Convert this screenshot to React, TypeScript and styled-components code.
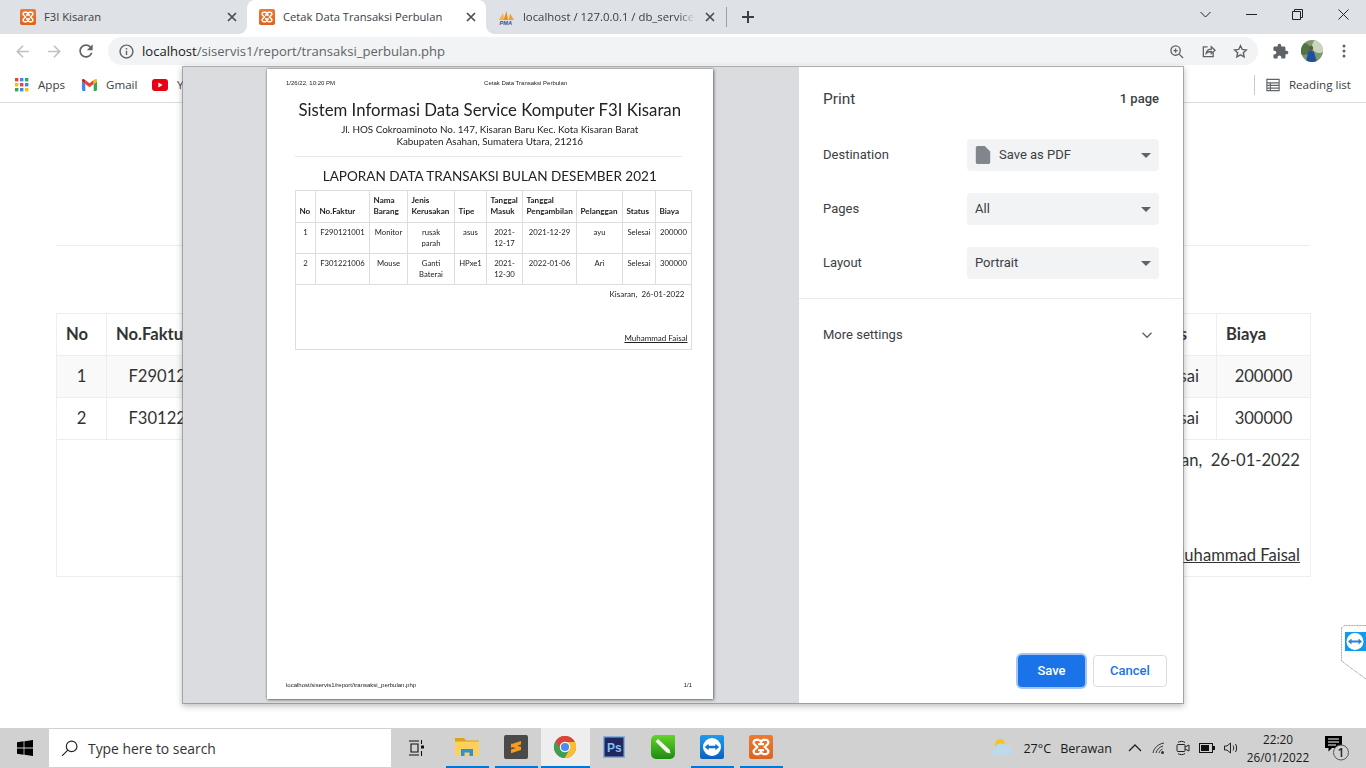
import React from "react";
import styled, { createGlobalStyle } from "styled-components";

const Global = createGlobalStyle`
  html, body { margin: 0; padding: 0; height: 100%; overflow: hidden; background: #fff; }
  #root { height: 100%; }
  * { box-sizing: border-box; }
`;

const UI = `"Open Sans", "Noto Sans", sans-serif`;
const PRINT_UI = `Roboto, "Liberation Sans", sans-serif`;
const PAGE = `Lato, "Liberation Sans", sans-serif`;

const Screen = styled.div`
  position: relative;
  width: 1366px;
  height: 768px;
  display: flex;
  flex-direction: column;
  overflow: hidden;
  font-family: ${UI};
  color: #333;
`;

/* ---------- Tab strip ---------- */
const TabStrip = styled.div`
  height: 34px;
  flex: none;
  background: #dee1e6;
  display: flex;
  align-items: stretch;
`;
const Tab = styled.div<{ $active?: boolean; $w: number; $pad: number }>`
  position: relative;
  width: ${(p) => p.$w}px;
  padding-left: ${(p) => p.$pad}px;
  display: flex;
  align-items: center;
  background: ${(p) => (p.$active ? "#fff" : "transparent")};
  border-radius: 8px 8px 0 0;
  ${(p) =>
    p.$active &&
    `
    &::before, &::after {
      content: "";
      position: absolute;
      bottom: 0;
      width: 8px;
      height: 8px;
      background: radial-gradient(circle at 0 0, #dee1e6 7.5px, #fff 8px);
    }
    &::before { left: -8px; }
    &::after { right: -8px; background: radial-gradient(circle at 100% 0, #dee1e6 7.5px, #fff 8px); }
  `}
`;
const TabTitle = styled.span<{ $w: number; $fade?: boolean }>`
  width: ${(p) => p.$w}px;
  margin-left: 8px;
  font-size: ${(p) => (p.$fade ? 11.35 : 11.2)}px;
  line-height: 16px;
  white-space: nowrap;
  overflow: hidden;
  color: #3c4043;
  ${(p) =>
    p.$fade &&
    `-webkit-mask-image: linear-gradient(90deg, #000 90%, transparent 100%); mask-image: linear-gradient(90deg, #000 90%, transparent 100%);`}
`;
const TabClose = styled.span<{ $left: number }>`
  position: absolute;
  left: ${(p) => p.$left}px;
  top: 11px;
  width: 12px;
  height: 12px;
  display: flex;
`;
const TabDivider = styled.div`
  width: 1px;
  height: 20px;
  margin: 7px 0 0 0;
  background: #9aa0a6;
`;
const NewTab = styled.div`
  width: 42px;
  display: flex;
  align-items: center;
  justify-content: center;
`;
const WindowButtons = styled.div`
  margin-left: auto;
  display: flex;
`;
const WindowButton = styled.div`
  width: 46px;
  height: 28px;
  display: flex;
  align-items: center;
  justify-content: center;
`;

/* ---------- Toolbar ---------- */
const Toolbar = styled.div`
  height: 34px;
  flex: none;
  background: #fff;
  display: flex;
  align-items: center;
  padding-left: 6px;
`;
const NavButton = styled.div`
  width: 32px;
  height: 28px;
  display: flex;
  align-items: center;
  justify-content: center;
`;
const Omnibox = styled.div`
  width: 1150px;
  height: 28px;
  margin-left: 6px;
  background: #f1f3f4;
  border-radius: 14px;
  display: flex;
  align-items: center;
  padding-left: 10px;
  padding-right: 2px;
`;
const Url = styled.span`
  margin-left: 7px;
  font-size: 13.07px;
  color: #5f6368;
  white-space: nowrap;
  b { font-weight: 400; color: #202124; }
`;
const OmniActions = styled.div`
  margin-left: auto;
  display: flex;
`;
const ToolbarEnd = styled.div`
  display: flex;
  margin-left: 6px;
`;

/* ---------- Bookmarks ---------- */
const Bookmarks = styled.div`
  height: 35px;
  flex: none;
  background: #fff;
  border-bottom: 1px solid #d9dbdf;
  display: flex;
  align-items: center;
  padding: 0 0 1px 15px;
  color: #3c4043;
`;
const Bookmark = styled.div<{ $w: number }>`
  width: ${(p) => p.$w}px;
  display: flex;
  align-items: center;
  gap: 9px;
  white-space: nowrap;
`;
const ReadingList = styled.div`
  margin-left: auto;
  margin-right: 15px;
  display: flex;
  align-items: center;
  height: 20px;
  padding-left: 11px;
  gap: 9px;
  border-left: 1px solid #c8cacd;
`;
const Caption = styled.span`
  font-size: 11.6px;
`;

/* ---------- Page behind the dialog ---------- */
const PageArea = styled.main`
  flex: 1;
  padding: 0 56px;
  background: #fff;
  font-family: ${PAGE};
  font-size: 16.6px;
  line-height: 24.6px;
  color: #333;
`;
const PageHead = styled.div`
  height: 143px;
  border-bottom: 1px solid #eee;
  margin-bottom: 67px;
`;
const BackTable = styled.table`
  width: 1254px;
  table-layout: fixed;
  border-collapse: collapse;
  th, td {
    border: 1px solid #eee;
    padding: 8px 9px;
    height: 42px;
    font-weight: 400;
    text-align: center;
    white-space: nowrap;
  }
  th { font-weight: 700; text-align: left; }
  tbody tr:nth-child(1) td { background: #f9f9f9; }
  tbody tr:nth-child(3) td { background: #fff; height: 137px; vertical-align: top; text-align: right; padding-right: 10px; }
`;
const SignName = styled.div`
  margin-top: 70px;
  text-decoration: underline;
`;

/* ---------- Print dialog ---------- */
const Dialog = styled.section`
  position: absolute;
  left: 183px;
  top: 67px;
  width: 1000px;
  height: 636px;
  display: flex;
  background: #fff;
  box-shadow: 0 0 0 1px rgba(120, 120, 120, 0.55), 0 2px 6px 1px rgba(60, 64, 67, 0.35);
`;
const PreviewPane = styled.div`
  width: 616px;
  flex: none;
  background: #dadce0;
  padding: 2px 0 0 84px;
`;
const Sheet = styled.article`
  width: 446px;
  height: 630px;
  background: #fff;
  box-shadow: 0 0 2px rgba(0, 0, 0, 0.45), 1px 1px 3px rgba(0, 0, 0, 0.4);
  display: flex;
  flex-direction: column;
  padding: 10px 21px 10px 19px;
  font-family: "Liberation Sans", Arial, sans-serif;
  font-size: 6px;
  color: #222;
`;
const SheetMarginRow = styled.div`
  display: flex;
  height: 8px;
  align-items: center;
  justify-content: space-between;
  white-space: nowrap;
  filter: blur(0.2px);
`;
const SheetTitle = styled.span`
  margin-left: 149px;
  margin-right: auto;
`;
const SheetBody = styled.div`
  flex: 1;
  padding: 12px 0 0 9px;
  font-family: ${PAGE};
  color: #222;
  filter: blur(0.2px);
`;
const Letterhead = styled.header`
  width: 389.5px;
  text-align: center;
`;
const OrgName = styled.h1`
  margin: 0;
  font-size: 16.75px;
  line-height: 22px;
  font-weight: 400;
  white-space: nowrap;
`;
const OrgAddress = styled.p`
  margin: 3px 0 0;
  font-size: 9.9px;
  line-height: 11.5px;
  white-space: nowrap;
`;
const Rule = styled.hr`
  margin: 9px 3px 0 0;
  border: 0;
  border-top: 1px solid #e8e8e8;
`;
const ReportTitle = styled.h2`
  margin: 9px 0 3.5px;
  font-size: 13.55px;
  line-height: 20px;
  font-weight: 400;
  white-space: nowrap;
`;
const PrintTable = styled.table`
  width: 396px;
  table-layout: fixed;
  border-collapse: collapse;
  font-size: 7.7px;
  line-height: 11px;
  th, td {
    border: 1px solid #ddd;
    padding: 4px 3.5px;
    font-weight: 400;
    text-align: center;
    vertical-align: top;
  }
  th { font-size: 8.1px; font-weight: 700; text-align: left; vertical-align: bottom; white-space: nowrap; padding-bottom: 5px; }
  td.foot { text-align: right; height: 65px; }
`;
const PrintDate = styled.div`
  padding-right: 3px;
  font-size: 8px;
`;
const PrintSign = styled.div`
  margin-top: 33px;
  font-size: 8px;
  text-decoration: underline;
`;

const Settings = styled.aside`
  flex: 1;
  display: flex;
  flex-direction: column;
  font-family: ${PRINT_UI};
  font-size: 13px;
  color: #3c4043;
`;
const SettingsHead = styled.div`
  height: 72px;
  padding: 22px 24px 0;
  display: flex;
  justify-content: space-between;
  align-items: flex-start;
`;
const SettingsTitle = styled.span`
  font-size: 15.5px;
  line-height: 20px;
  color: #3c4043;
`;
const PageCount = styled.span`
  font-size: 13px;
  line-height: 20px;
  font-weight: 500;
  color: #3c4043;
`;
const SettingRow = styled.div`
  height: 32px;
  margin: 0 24px 22px;
  display: flex;
  align-items: center;
  justify-content: space-between;
`;
const RowLabel = styled.span`
  margin-top: -2px;
`;
const SelectBox = styled.div`
  width: 192px;
  height: 32px;
  background: #f1f3f4;
  border-radius: 4px;
  display: flex;
  align-items: center;
  padding: 0 8px 2px 8px;
  color: #3c4043;
`;
const Caret = styled.span`
  margin: 2px 0 0 auto;
  width: 0;
  height: 0;
  border-left: 5px solid transparent;
  border-right: 5px solid transparent;
  border-top: 5px solid #5f6368;
`;
const DocIcon = styled.svg`
  margin: 2px 8px 0 0;
  flex: none;
`;
const Divider = styled.div`
  height: 1px;
  margin-top: -3px;
  background: #e8eaed;
`;
const MoreRow = styled.div`
  margin: 0 30px 0 24px;
  height: 73px;
  padding-bottom: 2px;
  display: flex;
  align-items: center;
  justify-content: space-between;
`;
const Actions = styled.div`
  margin-top: auto;
  padding: 0 16px 16px 0;
  display: flex;
  justify-content: flex-end;
  gap: 8px;
`;
const SaveButton = styled.button`
  width: 67px;
  height: 32px;
  border: 0;
  border-radius: 4px;
  background: #1a73e8;
  box-shadow: 0 0 0 2px #a4c6f6;
  color: #fff;
  font: 500 13px ${PRINT_UI};
  padding: 0 0 2px;
`;
const CancelButton = styled.button`
  width: 74px;
  height: 32px;
  background: #fff;
  border: 1px solid #dadce0;
  border-radius: 4px;
  color: #1a73e8;
  font: 500 13px ${PRINT_UI};
  padding: 0 0 2px;
`;

const RemoteTab = styled.div`
  position: absolute;
  right: 0;
  top: 625px;
  width: 25px;
  height: 55px;
  display: flex;
`;

/* ---------- Taskbar ---------- */
const Taskbar = styled.footer`
  height: 40px;
  flex: none;
  background: #d1d1d1;
  display: flex;
  align-items: stretch;
  color: #1a1a1a;
`;
const StartButton = styled.div`
  width: 49px;
  display: flex;
  align-items: center;
  justify-content: center;
`;
const SearchBox = styled.div`
  width: 342px;
  margin: 1px 0;
  background: #fff;
  display: flex;
  align-items: center;
  padding-left: 12px;
  gap: 10px;
  font-size: 13.9px;
  color: #333;
`;
const TaskView = styled.div`
  width: 51.5px;
  padding-left: 2px;
  display: flex;
  align-items: center;
  justify-content: center;
`;
const TaskButton = styled.div<{ $active?: boolean; $open?: boolean }>`
  width: 49px;
  display: flex;
  align-items: center;
  justify-content: center;
  background: ${(p) => (p.$active ? "#eeeeee" : "transparent")};
  border-bottom: 2px solid transparent;
  border-image: ${(p) =>
    p.$open
      ? p.$active
        ? "linear-gradient(#0078d7,#0078d7) 1"
        : "linear-gradient(90deg,transparent 4px,#0078d7 4px,#0078d7 45px,transparent 45px) 1"
      : "none"};
`;
const Tray = styled.div`
  margin-left: auto;
  display: flex;
  align-items: center;
  font-size: 12.6px;
  padding-right: 17px;
`;
const Weather = styled.div`
  display: flex;
  align-items: center;
  gap: 9px;
  white-space: nowrap;
`;
const WeatherIcon = styled.svg`
  margin-right: 1px;
`;
const TrayIcons = styled.div`
  display: flex;
  align-items: center;
  gap: 8px;
  margin-left: 15px;
`;
const Clock = styled.div`
  width: 78px;
  text-align: center;
  font-size: 11.8px;
  line-height: 18px;
`;
const Notify = styled.div`
  margin-left: 8px;
  display: flex;
`;
const ActionSlot = styled.div`
  width: 32px;
  height: 28px;
  display: flex;
  align-items: center;
  justify-content: center;
`;

/* ---------- Icons ---------- */
const Xampp = ({ size = 16 }: { size?: number }) => (
  <svg width={size} height={size} viewBox="0 0 16 16" style={{ flex: "none" }}>
    <defs>
      <linearGradient id="xg" x1="0" y1="0" x2="0" y2="1">
        <stop offset="0" stopColor="#ef7a2f" />
        <stop offset="1" stopColor="#dc6420" />
      </linearGradient>
    </defs>
    <rect width="16" height="16" rx="1.8" fill="url(#xg)" />
    <path
      d="M6.8 3.2H4.7A1.7 1.7 0 0 0 3.5 6L5.5 8 3.5 10A1.7 1.7 0 0 0 4.700 12.800H6.800M9.200 3.200h2.100A1.700 1.700 0 0 1 12.500 6L10.500 8l2 2A1.700 1.700 0 0 1 11.300 12.800H9.200M6 6h4M6 10h4M6.800 3.200 8 4.600l1.200-1.400M6.800 12.800 8 11.400l1.200 1.400"
      fill="none"
      stroke="#fff"
      strokeWidth="1.5"
    />
  </svg>
);
const Pma = () => (
  <svg width="17" height="16" viewBox="0 0 17 16" style={{ flex: "none" }}>
    <path d="M1 11 5 4l1 7z" fill="#f7b23b" />
    <path d="M5.5 11 8.500 2 10 11z" fill="#ee8a1d" />
    <path d="M10.500 11 12 4.500 16 11z" fill="#f4a025" />
    <text x="1.500" y="16" fontFamily="Liberation Sans" fontSize="5.600" fontWeight="700" fontStyle="italic" fill="#2f4f8f">PMA</text>
  </svg>
);
const CloseX = () => (
  <svg width="12" height="12" viewBox="0 0 12 12">
    <path d="M2 2l8 8M10 2l-8 8" stroke="#494c50" strokeWidth="1.7" />
  </svg>
);
const Mat = ({ d, color, size = 18 }: { d: string; color: string; size?: number }) => (
  <svg width={size} height={size} viewBox="0 0 24 24" style={{ flex: "none" }}>
    <path d={d} fill={color} />
  </svg>
);
const Line = ({ children, size = 16, color = "#5f6368", w = 1.6 }: { children: React.ReactNode; size?: number; color?: string; w?: number }) => (
  <svg width={size} height={size} viewBox="0 0 16 16" fill="none" stroke={color} strokeWidth={w} style={{ flex: "none" }}>
    {children}
  </svg>
);
const WinGlyph = ({ children }: { children: React.ReactNode }) => (
  <svg width="11" height="11" viewBox="0 0 11 11" fill="none" stroke="#222" strokeWidth="1">
    {children}
  </svg>
);
const Apps = () => {
  const c = ["#ea4335", "#4285f4", "#34a853", "#fbbc05", "#ea4335", "#4285f4", "#34a853", "#4285f4", "#fbbc05"];
  return (
    <svg width="14" height="14" viewBox="0 0 14 14" style={{ flex: "none" }}>
      {c.map((f, i) => (
        <rect key={i} x={(i % 3) * 5} y={Math.floor(i / 3) * 5} width="3.4" height="3.4" fill={f} />
      ))}
    </svg>
  );
};
const Gmail = () => (
  <svg width="15" height="12" viewBox="0 0 15 12" style={{ flex: "none" }}>
    <path d="M0 1.200v9.600C0 11.400.5 12 1.200 12H3.300V5L0 2.200z" fill="#4285f4" />
    <path d="M15 1.200v9.600c0 .6-.5 1.200-1.200 1.200h-2.100V5L15 2.200z" fill="#34a853" />
    <path d="M3.300 5 7.500 8.200 11.700 5V1L7.500 4.200 3.300 1z" fill="#ea4335" />
    <path d="M0 2.200 3.300 5V1L2 .2C1 -.3 0 .3 0 1.200z" fill="#c5221f" />
    <path d="M15 2.200 11.700 5V1L13 .2c1-.5 2 .1 2 1z" fill="#fbbc05" />
  </svg>
);
const Youtube = () => (
  <svg width="16" height="12" viewBox="0 0 16 12" style={{ flex: "none" }}>
    <rect width="16" height="12" rx="3" fill="#e60012" />
    <path d="M6.400 3.400v5.200L10.600 6z" fill="#fff" />
  </svg>
);
const Avatar = () => (
  <svg width="22" height="22" viewBox="0 0 22 22" style={{ flex: "none" }}>
    <defs>
      <clipPath id="av"><circle cx="11" cy="11" r="11" /></clipPath>
    </defs>
    <g clipPath="url(#av)">
      <rect width="22" height="22" fill="#7d9a6c" />
      <circle cx="18" cy="6" r="7" fill="#c9d6bd" />
      <circle cx="3" cy="9" r="6" fill="#4f7343" />
      <path d="M5 22l2-10 3-2 3 2 3 10z" fill="#1f4f9e" />
      <circle cx="10" cy="8" r="2.200" fill="#6b5140" />
    </g>
  </svg>
);
const Chrome = () => {
  const wedge = "M24 24 24 14 43.600 14A22 22 0 0 0 5.540 12.030L15.340 29Z";
  return (
    <svg width="24" height="24" viewBox="0 0 48 48">
      <circle cx="24" cy="24" r="22" fill="#db4437" />
      <path d={wedge} fill="#db4437" />
      <path d={wedge} fill="#fbc02d" transform="rotate(120 24 24)" />
      <path d={wedge} fill="#3d9f52" transform="rotate(240 24 24)" />
      <circle cx="24" cy="24" r="10.500" fill="#fff" />
      <circle cx="24" cy="24" r="8.200" fill="#4c8bf5" />
    </svg>
  );
};
const Explorer = () => (
  <svg width="24" height="24" viewBox="0 0 24 24">
    <path d="M0 3h9l2 2.500H24V8H0z" fill="#d9a21b" />
    <path d="M0 6.500h24V21H0z" fill="#fbd15b" />
    <path d="M6 14h12v7h-3.500v-3.500h-5V21H6z" fill="#2f8fd8" />
  </svg>
);
const Sublime = () => (
  <svg width="24" height="24" viewBox="0 0 24 24">
    <rect width="24" height="24" rx="2" fill="#4a4a4a" />
    <path d="M7 9.200 17 6v3.600L7 12.800zM17 15l-10-3.400v-3l10 3.400zM7 14.600 17 11.400V15L7 18.200z" fill="#f79a1e" />
  </svg>
);
const Photoshop = () => (
  <svg width="22" height="22" viewBox="0 0 22 22">
    <rect x=".75" y=".75" width="20.500" height="20.500" fill="#20275c" stroke="#86aee0" strokeWidth="1.500" />
    <text x="4" y="15.500" fontFamily="Liberation Sans" fontWeight="700" fontSize="12" fill="#86bdf5">Ps</text>
  </svg>
);
const GreenPen = () => (
  <svg width="24" height="24" viewBox="0 0 24 24">
    <defs>
      <linearGradient id="gp" x1="0" y1="0" x2="0" y2="1">
        <stop offset="0" stopColor="#63d52a" />
        <stop offset="1" stopColor="#1d8a12" />
      </linearGradient>
    </defs>
    <path d="M5 0H24V19a5 5 0 0 1-5 5H5a5 5 0 0 1-5-5V5a5 5 0 0 1 5-5z" fill="url(#gp)" />
    <path d="M4.500 6.500 7 4 18.500 14.500 19.500 18.500 15.500 17.500z" fill="#f3f5ee" />
  </svg>
);
const TeamViewer = () => (
  <svg width="24" height="24" viewBox="0 0 24 24">
    <defs>
      <linearGradient id="tv" x1="0" y1="0" x2="0" y2="1">
        <stop offset="0" stopColor="#1b9ef0" />
        <stop offset="1" stopColor="#0a5fc0" />
      </linearGradient>
    </defs>
    <rect width="24" height="24" rx="2" fill="url(#tv)" />
    <circle cx="12" cy="12" r="9" fill="#fff" />
    <path d="M4.800 12 8.600 8.800v2h6.800v-2l3.800 3.200-3.800 3.200v-2H8.600v2z" fill="#0e72d8" />
  </svg>
);

const backCols = [50, 140, 130, 170, 110, 155, 200, 120, 85, 94];
const printCols = [20, 54, 38, 47, 32, 36, 54, 46, 33, 36];
const headers = ["No", "No.Faktur", "Nama Barang", "Jenis Kerusakan", "Tipe", "Tanggal Masuk", "Tanggal Pengambilan", "Pelanggan", "Status", "Biaya"];
const rows = [
  ["1", "F290121001", "Monitor", "rusak parah", "asus", "2021-12-17", "2021-12-29", "ayu", "Selesai", "200000"],
  ["2", "F301221006", "Mouse", "Ganti Baterai", "HPxe1", "2021-12-30", "2022-01-06", "Ari", "Selesai", "300000"],
];

export default function App() {
  return (
    <Screen>
      <Global />
      <TabStrip>
        <Tab $w={247} $pad={20}>
          <Xampp />
          <TabTitle $w={170}>F3I Kisaran</TabTitle>
          <TabClose $left={226}><CloseX /></TabClose>
        </Tab>
        <Tab $active $w={239} $pad={12}>
          <Xampp />
          <TabTitle $w={190}>Cetak Data Transaksi Perbulan</TabTitle>
          <TabClose $left={218}><CloseX /></TabClose>
        </Tab>
        <Tab $w={240} $pad={12}>
          <Pma />
          <TabTitle $w={172} $fade>localhost / 127.0.0.1 / db_service</TabTitle>
          <TabClose $left={218}><CloseX /></TabClose>
        </Tab>
        <TabDivider />
        <NewTab>
          <Line size={16} color="#3c4043" w={2}><path d="M8 2v12M2 8h12" /></Line>
        </NewTab>
        <WindowButtons>
          <WindowButton>
            <WinGlyph><path d="M.5 3 5.500 8 10.500 3" /></WinGlyph>
          </WindowButton>
          <WindowButton>
            <WinGlyph><path d="M0 5.500h11" /></WinGlyph>
          </WindowButton>
          <WindowButton>
            <WinGlyph><path d="M.5 2.500h8v8h-8zM2.500 2.500V.5h8v8H8.500" /></WinGlyph>
          </WindowButton>
          <WindowButton>
            <WinGlyph><path d="M.5.5l10 10M10.500.5l-10 10" /></WinGlyph>
          </WindowButton>
        </WindowButtons>
      </TabStrip>

      <Toolbar>
        <NavButton><Mat d="M20 11H7.830l5.590-5.590L12 4l-8 8 8 8 1.410-1.410L7.830 13H20v-2z" color="#bdc1c6" size={19} /></NavButton>
        <NavButton><Mat d="M12 4l-1.410 1.410L16.170 11H4v2h12.170l-5.580 5.590L12 20l8-8z" color="#bdc1c6" size={19} /></NavButton>
        <NavButton><Mat d="M17.650 6.350C16.200 4.900 14.210 4 12 4c-4.420 0-7.990 3.580-7.990 8s3.570 8 7.990 8c3.730 0 6.840-2.550 7.730-6h-2.080c-.82 2.330-3.040 4-5.650 4-3.310 0-6-2.690-6-6s2.690-6 6-6c1.660 0 3.140.69 4.220 1.780L13 11h7V4l-2.350 2.350z" color="#5f6368" size={20} /></NavButton>
        <Omnibox>
          <Mat d="M11 7h2v2h-2zm0 4h2v6h-2zm1-9C6.480 2 2 6.480 2 12s4.480 10 10 10 10-4.480 10-10S17.520 2 12 2zm0 18c-4.410 0-8-3.590-8-8s3.590-8 8-8 8 3.590 8 8-3.590 8-8 8z" color="#5f6368" size={17} />
          <Url><b>localhost</b>/siservis1/report/transaksi_perbulan.php</Url>
          <OmniActions>
            <ActionSlot>
              <Line size={15} w={1.4}><circle cx="7" cy="7" r="5" /><path d="M10.800 10.800 15 15M4.800 7h4.400M7 4.800v4.400" /></Line>
            </ActionSlot>
            <ActionSlot>
              <Line size={15} w={1.4}><path d="M7 3H2.500v10.500H13V9" /><path d="M5.500 10C6 7 8 5.500 11 5.500V3l4 3.700-4 3.500V8C9 8 7 8.500 5.500 10z" /></Line>
            </ActionSlot>
            <ActionSlot>
              <Line size={15} w={1.5}><path d="M8 1.800l1.900 4 4.300.5-3.200 3 .9 4.400L8 11.500l-3.900 2.200.9-4.400-3.200-3 4.300-.5z" /></Line>
            </ActionSlot>
          </OmniActions>
        </Omnibox>
        <ToolbarEnd>
          <ActionSlot><Mat d="M20.500 11H19V7c0-1.100-.9-2-2-2h-4V3.500C13 2.120 11.880 1 10.500 1S8 2.120 8 3.500V5H4c-1.100 0-1.990.9-1.990 2v3.800H3.500c1.490 0 2.700 1.210 2.700 2.700s-1.210 2.700-2.700 2.700H2V20c0 1.100.9 2 2 2h3.800v-1.500c0-1.490 1.210-2.700 2.700-2.700 1.490 0 2.700 1.210 2.700 2.700V22H17c1.100 0 2-.9 2-2v-4h1.500c1.380 0 2.500-1.120 2.500-2.500S21.880 11 20.500 11z" color="#5f6368" size={17} /></ActionSlot>
          <ActionSlot><Avatar /></ActionSlot>
          <ActionSlot>
            <svg width="4" height="14" viewBox="0 0 4 14"><circle cx="2" cy="2" r="1.500" fill="#5f6368" /><circle cx="2" cy="7" r="1.500" fill="#5f6368" /><circle cx="2" cy="12" r="1.500" fill="#5f6368" /></svg>
          </ActionSlot>
        </ToolbarEnd>
      </Toolbar>

      <Bookmarks>
        <Bookmark $w={67}><Apps /><Caption>Apps</Caption></Bookmark>
        <Bookmark $w={70}><Gmail /><Caption>Gmail</Caption></Bookmark>
        <Bookmark $w={60}><Youtube /><Caption>YouTube</Caption></Bookmark>
        <ReadingList>
          <Line size={14} color="#5f6368" w={1.3}><path d="M1 1.500h14v13H1zM1 5.500h14M1 8.500h14M1 11.500h14M5 5.500v9" /></Line>
          <Caption>Reading list</Caption>
        </ReadingList>
      </Bookmarks>

      <PageArea>
        <PageHead />
        <BackTable>
          <colgroup>{backCols.map((w, i) => <col key={i} style={{ width: w }} />)}</colgroup>
          <thead><tr>{headers.map((h) => <th key={h}>{h}</th>)}</tr></thead>
          <tbody>
            {rows.map((r) => <tr key={r[0]}>{r.map((c, i) => <td key={i}>{c}</td>)}</tr>)}
            <tr>
              <td colSpan={10}>
                Kisaran,&nbsp; 26-01-2022
                <SignName>Muhammad Faisal</SignName>
              </td>
            </tr>
          </tbody>
        </BackTable>
      </PageArea>

      <Taskbar>
        <StartButton>
          <svg width="16" height="16" viewBox="0 0 16 16"><path d="M0 2.300 6.600 1.300V7.600H0zM7.400 1.200 16 0V7.600H7.400zM0 8.400h6.600v6.300L0 13.700zM7.400 8.400H16V16L7.400 14.800z" fill="#000" /></svg>
        </StartButton>
        <SearchBox>
          <Line size={17} color="#222" w={1.1}><circle cx="10" cy="6" r="5" /><path d="M6.400 9.600 1 15" /></Line>
          Type here to search
        </SearchBox>
        <TaskView>
          <svg width="17" height="16" viewBox="0 0 17 16" fill="none" stroke="#111" strokeWidth="1.100"><path d="M0 1h10M0 15h10M2 4h7v8H2zM12.500 0v4M12.500 11v5" /><rect x="12" y="5.500" width="3" height="3" fill="#111" stroke="none" /></svg>
        </TaskView>
        <TaskButton $open><Explorer /></TaskButton>
        <TaskButton $open><Sublime /></TaskButton>
        <TaskButton $active $open><Chrome /></TaskButton>
        <TaskButton><Photoshop /></TaskButton>
        <TaskButton><GreenPen /></TaskButton>
        <TaskButton $open><TeamViewer /></TaskButton>
        <TaskButton $open><Xampp size={24} /></TaskButton>
        <Tray>
          <Weather>
            <WeatherIcon width="22" height="20" viewBox="0 0 22 20">
              <circle cx="9" cy="6" r="5" fill="#f5c51f" />
              <path d="M5 18a4 4 0 0 1-.6-7.900A6 6 0 0 1 15.500 8.500 4.800 4.800 0 0 1 17 18z" fill="#bcd9ee" />
            </WeatherIcon>
            <span>27°C</span>
            <span>Berawan</span>
          </Weather>
          <TrayIcons>
            <Line size={16} color="#222" w={1.3}><path d="M2 11l6-6 6 6" /></Line>
            <Line size={16} color="#333" w={1}><path d="M2 13C3 8 7 4 13 3M5 13c.8-3 3-6 7-7M8 13c.5-2 1.500-3 3.500-4" /><circle cx="11.500" cy="12.500" r="1.500" fill="#333" stroke="none" /></Line>
            <Line size={16} color="#222" w={1}><rect x="2" y="4.500" width="8" height="7" rx="1" /><path d="M10 7l4-2v6l-4-2M3 2.500c1.500-1.500 5.500-1.500 7 0M3 13.500c1.500 1.500 5.500 1.500 7 0" /></Line>
            <svg width="16" height="10" viewBox="0 0 16 10"><rect x=".5" y=".5" width="13" height="9" fill="none" stroke="#111" /><rect x="2" y="2" width="8" height="6" fill="#111" /><rect x="14" y="3" width="2" height="4" fill="#111" /></svg>
            <Line size={16} color="#222" w={1}><path d="M1.500 6v4h2.500l3.500 3V3L4 6zM10 5.500c1 1.500 1 3.500 0 5M12.500 4c1.500 2.500 1.500 5.500 0 8" /></Line>
          </TrayIcons>
          <Clock>22:20<br />26/01/2022</Clock>
          <Notify>
            <svg width="24" height="25" viewBox="0 0 24 25">
              <path d="M0 0h17v12H7l-3.500 3.500V12H0z" fill="#000" />
              <path d="M3 3h11M3 6h11M3 9h8" stroke="#fff" strokeWidth="1" />
              <circle cx="16" cy="16.500" r="7.500" fill="#d1d1d1" stroke="#555" strokeWidth="1" />
              <text x="16" y="21" textAnchor="middle" fontFamily="Open Sans" fontSize="12" fontWeight="600" fill="#222">1</text>
            </svg>
          </Notify>
        </Tray>
      </Taskbar>

      <RemoteTab>
        <svg width="25" height="55" viewBox="0 0 25 55">
          <path d="M25 .5H3L.5 3V36L25 54" fill="#fff" stroke="#9a9a9a" strokeWidth="1" strokeDasharray="1 .6" />
          <rect x="4" y="7" width="21" height="19" fill="#0e9bf0" />
          <circle cx="14" cy="16.500" r="8.500" fill="#fff" />
          <path d="M7 16.500 10.500 13.500v2h7v-2l3.500 3-3.500 3v-2h-7v2z" fill="#2f7fd8" />
        </svg>
      </RemoteTab>

      <Dialog>
        <PreviewPane>
          <Sheet>
            <SheetMarginRow>
              <span>1/26/22, 10:20 PM</span>
              <SheetTitle>Cetak Data Transaksi Perbulan</SheetTitle>
            </SheetMarginRow>
            <SheetBody>
              <Letterhead>
                <OrgName>Sistem Informasi Data Service Komputer F3I Kisaran</OrgName>
                <OrgAddress>
                  Jl. HOS Cokroaminoto No. 147, Kisaran Baru Kec. Kota Kisaran Barat<br />
                  Kabupaten Asahan, Sumatera Utara, 21216
                </OrgAddress>
                <Rule />
                <ReportTitle>LAPORAN DATA TRANSAKSI BULAN DESEMBER 2021</ReportTitle>
              </Letterhead>
              <PrintTable>
                <colgroup>{printCols.map((w, i) => <col key={i} style={{ width: w }} />)}</colgroup>
                <thead>
                  <tr>
                    <th>No</th>
                    <th>No.Faktur</th>
                    <th>Nama<br />Barang</th>
                    <th>Jenis<br />Kerusakan</th>
                    <th>Tipe</th>
                    <th>Tanggal<br />Masuk</th>
                    <th>Tanggal<br />Pengambilan</th>
                    <th>Pelanggan</th>
                    <th>Status</th>
                    <th>Biaya</th>
                  </tr>
                </thead>
                <tbody>
                  {rows.map((r) => <tr key={r[0]}>{r.map((c, i) => <td key={i}>{c}</td>)}</tr>)}
                  <tr>
                    <td className="foot" colSpan={10}>
                      <PrintDate>Kisaran,&nbsp; 26-01-2022</PrintDate>
                      <PrintSign>Muhammad Faisal</PrintSign>
                    </td>
                  </tr>
                </tbody>
              </PrintTable>
            </SheetBody>
            <SheetMarginRow>
              <span>localhost/siservis1/report/transaksi_perbulan.php</span>
              <span>1/1</span>
            </SheetMarginRow>
          </Sheet>
        </PreviewPane>
        <Settings>
          <SettingsHead>
            <SettingsTitle>Print</SettingsTitle>
            <PageCount>1 page</PageCount>
          </SettingsHead>
          <SettingRow>
            <RowLabel>Destination</RowLabel>
            <SelectBox>
              <DocIcon width="16" height="18" viewBox="4 2 16 20"><path d="M6 2c-1.100 0-1.990.9-1.990 2L4 20c0 1.100.89 2 1.990 2H18c1.100 0 2-.9 2-2V8l-6-6z" fill="#80868b" /></DocIcon>
              Save as PDF
              <Caret />
            </SelectBox>
          </SettingRow>
          <SettingRow>
            <RowLabel>Pages</RowLabel>
            <SelectBox>All<Caret /></SelectBox>
          </SettingRow>
          <SettingRow>
            <RowLabel>Layout</RowLabel>
            <SelectBox>Portrait<Caret /></SelectBox>
          </SettingRow>
          <Divider />
          <MoreRow>
            More settings
            <Line size={12} color="#5f6368" w={1.8}><path d="M2 5l6 6 6-6" /></Line>
          </MoreRow>
          <Actions>
            <SaveButton>Save</SaveButton>
            <CancelButton>Cancel</CancelButton>
          </Actions>
        </Settings>
      </Dialog>
    </Screen>
  );
}
